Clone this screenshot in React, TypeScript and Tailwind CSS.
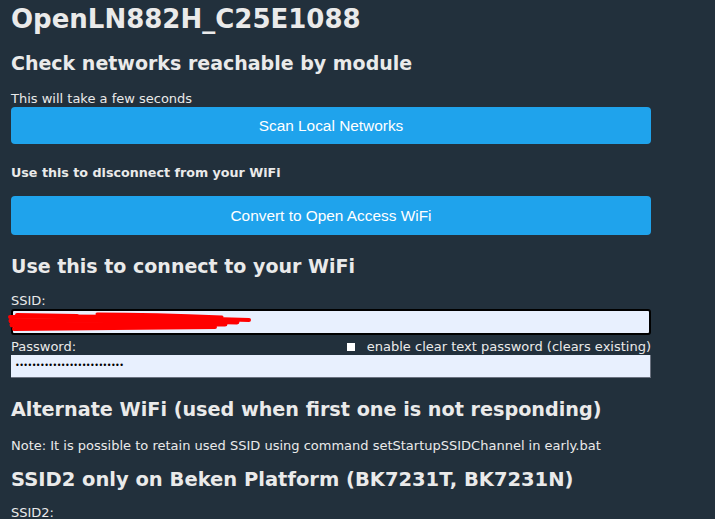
import React from "react";

export default function App() {
  return (
    <div className="min-h-screen w-full overflow-hidden bg-[#22303c] text-[#eaeaea] font-['DejaVu_Sans',Verdana,sans-serif]">
      <div className="w-[640px] ml-[11px] pt-[4px]">
        <h1 className="text-[26px] leading-[30px] font-bold">OpenLN882H_C25E1088</h1>
        <h2 className="mt-[17px] text-[19px] leading-[24px] font-bold">Check networks reachable by module</h2>
        <p className="mt-[16px] text-[13px] leading-[15px]">This will take a few seconds</p>
        <button className="mt-[1px] w-full h-[37px] rounded-[4px] bg-[#1fa3ec] text-white text-[15.4px] font-['Liberation_Sans',Arial,sans-serif]">
          Scan Local Networks
        </button>
        <p className="mt-[21px] text-[12.7px] leading-[15px] font-bold">Use this to disconnect from your WiFi</p>
        <button className="mt-[16px] w-full h-[39px] rounded-[4px] bg-[#1fa3ec] text-white text-[15.4px] font-['Liberation_Sans',Arial,sans-serif]">
          Convert to Open Access WiFi
        </button>
        <h2 className="mt-[19px] text-[19px] leading-[24px] font-bold">Use this to connect to your WiFi</h2>
        <label className="block mt-[15px] text-[13px] leading-[16px]">SSID:</label>
        <div className="relative mt-[0px] h-[26px] w-full rounded-[3px] border-2 border-black bg-[#e8f0fe]">
          <svg className="absolute left-[-6px] top-[0px]" width="250" height="22" viewBox="0 0 250 22">
            <g stroke="#ff0000" strokeLinecap="round" fill="none">
              <path d="M3 6 C 60 5, 150 6, 242 9" strokeWidth="4" />
              <path d="M4 10 C 70 9, 160 9, 230 11" strokeWidth="5" />
              <path d="M5 14 C 60 14, 140 13, 218 13" strokeWidth="5" />
              <path d="M7 18 C 60 18, 130 17, 208 16" strokeWidth="4" />
              <path d="M90 3 C 130 3, 170 4, 215 6" strokeWidth="3" />
              <path d="M10 4 L 70 5" strokeWidth="4" />
            </g>
          </svg>
        </div>
        <div className="mt-[3px] flex items-center justify-between text-[13px] leading-[17px]">
          <span>Password:</span>
          <span className="flex items-center">
            <span className="inline-block w-[8px] h-[8px] bg-white mr-[12px]" />
            <span>enable clear text password (clears existing)</span>
          </span>
        </div>
        <div className="mt-[0px] h-[23px] w-full bg-[#e8f0fe] border-b border-r border-[#6b7280] flex items-center pl-[4px]">
          <span className="text-black text-[8px] leading-[8px] tracking-[-0.55px] font-['DejaVu_Sans',sans-serif]">••••••••••••••••••••••••••</span>
        </div>
        <h2 className="mt-[20px] text-[19.2px] leading-[24px] font-bold">Alternate WiFi (used when first one is not responding)</h2>
        <p className="mt-[16px] text-[13px] leading-[15px]">Note: It is possible to retain used SSID using command setStartupSSIDChannel in early.bat</p>
        <h2 className="mt-[15px] text-[19.5px] leading-[24px] font-bold">SSID2 only on Beken Platform (BK7231T, BK7231N)</h2>
        <label className="block mt-[13px] text-[13px] leading-[16px]">SSID2:</label>
      </div>
    </div>
  );
}
